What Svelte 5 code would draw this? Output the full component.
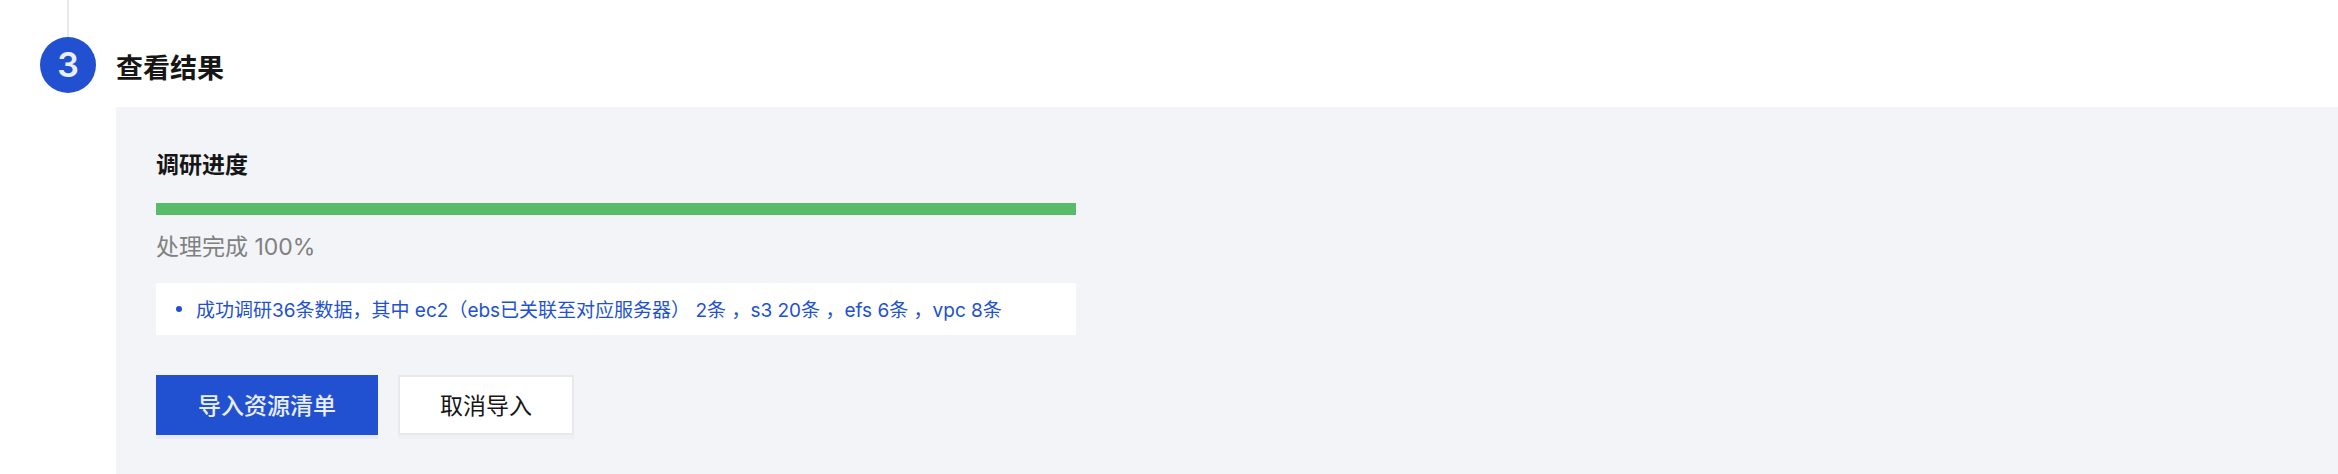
<script>
    export let step = 3;
    export let title = '查看结果';
    export let progress = 100;
    export let messages = [
        '成功调研36条数据，其中 ec2（ebs已关联至对应服务器） 2条 ，s3 20条 ，efs 6条 ，vpc 8条'
    ];
</script>

<style>
    :global(body) {
        background-color: #fff;
    }

    .step {
        display: grid;
        grid-template-columns: 56px 1fr;
        column-gap: 20px;
        padding-left: 40px;
        font-family: Inter, "Noto Sans CJK SC", sans-serif;
        color: #161616;
    }

    .rail {
        display: flex;
        flex-direction: column;
        align-items: center;
    }

    .line {
        width: 2px;
        height: 37px;
        background-color: #e8e9ee;
    }

    .number {
        width: 56px;
        height: 56px;
        border-radius: 50%;
        background-color: #2151d1;
        color: #e9eefa;
        font-size: 34px;
        font-weight: 600;
        line-height: 56px;
        text-align: center;
    }

    h2, h3, p, ul {
        margin: 0;
    }

    h2 {
        padding: 49px 0 18px;
        font-size: 27px;
        font-weight: 600;
        line-height: 40px;
    }

    .panel {
        padding: 40px 40px 39px;
        background-color: #f2f4f8;
    }

    .result {
        max-width: 920px;
    }

    h3 {
        font-size: 23px;
        font-weight: 600;
        line-height: 36px;
    }

    .bar {
        height: 12px;
        margin: 20px 0 16px;
        background-color: #e8e9ee;
    }

    .fill {
        height: 100%;
        background-color: #57bc67;
    }

    .status {
        color: #808080;
        font-size: 23px;
        line-height: 32px;
    }

    ul {
        margin: 20px 0 40px;
        padding: 12px 20px 8px;
        background-color: #fff;
        list-style: none;
    }

    li {
        display: flex;
        align-items: center;
        gap: 14px;
        color: #2151d1;
        font-size: 19px;
        line-height: 32px;
    }

    li::before {
        content: "";
        flex: none;
        width: 6px;
        height: 6px;
        margin-bottom: 4px;
        border-radius: 50%;
        background-color: #2151d1;
    }

    .actions {
        display: flex;
        gap: 20px;
    }

    button {
        height: 60px;
        padding: 0 40px 2px;
        border: 2px solid #e8e9ee;
        background-color: #fff;
        box-shadow: 0 4px 0 #eff0f5;
        color: #161616;
        font: inherit;
        font-size: 23px;
        cursor: pointer;
    }

    button.primary {
        border-color: #2151d1;
        background-color: #2151d1;
        box-shadow: 0 4px 0 #e6eaf6;
        color: #e9eefa;
        font-weight: 500;
    }
</style>

<section class="step">
    <div class="rail">
        <div class="line"></div>
        <div class="number">{step}</div>
    </div>
    <div class="content">
        <h2>{title}</h2>
        <div class="panel">
            <div class="result">
                <h3 id="progress-label">调研进度</h3>
                <div
                    class="bar"
                    role="progressbar"
                    aria-labelledby="progress-label"
                    aria-valuemin="0"
                    aria-valuemax="100"
                    aria-valuenow={progress}>
                    <div class="fill" style={"width: " + progress + "%"}></div>
                </div>
                <p class="status">处理完成 {progress}%</p>
                <ul>
                    {#each messages as message}
                        <li>{message}</li>
                    {/each}
                </ul>
            </div>
            <div class="actions">
                <button type="button" class="primary">导入资源清单</button>
                <button type="button">取消导入</button>
            </div>
        </div>
    </div>
</section>
